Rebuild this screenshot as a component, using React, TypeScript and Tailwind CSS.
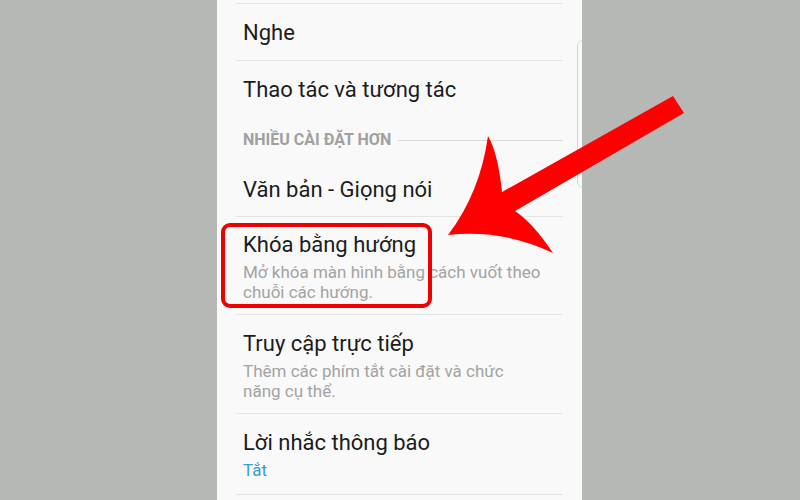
import React from "react";

const Divider = () => <div className="mx-[19px] h-px bg-[#e4e4e4]" />;

function Row({ title, sub, subColor = "text-[#a3a3a3]", pt = "pt-[16px]", pb = "pb-[13px]" }: { title: string; sub?: string[]; subColor?: string; pt?: string; pb?: string }) {
  return (
    <div className={`pl-[26px] pr-[20px] ${pt} ${pb}`}>
      <div className="text-[22px] leading-[28px] text-[#1c1c1c]">{title}</div>
      {sub && (
        <div className={`mt-[3px] flex flex-col text-[17px] leading-[20px] ${subColor}`}>
          {sub.map((l, i) => (
            <span key={i} className="whitespace-nowrap">{l}</span>
          ))}
        </div>
      )}
    </div>
  );
}

function SingleRow({ title, h }: { title: string; h: string }) {
  return (
    <div className={`flex items-center pl-[26px] ${h} text-[22px] text-[#1c1c1c]`}>{title}</div>
  );
}

export default function App() {
  return (
    <div
      className="relative flex h-[500px] w-[800px] overflow-hidden bg-[#b6b8b6] pl-[217px]"
      style={{ fontFamily: "Roboto, 'Noto Sans', sans-serif" }}
    >
      <div className="relative h-[500px] w-[365px] overflow-hidden bg-[#f9f9f9]">
        <div className="h-[3px]" />
        <Divider />
        <SingleRow title="Nghe" h="h-[56px]" />
        <Divider />
        <SingleRow title="Thao tác và tương tác" h="h-[57px]" />
        <div className="flex h-[44px] items-center gap-[7px] pl-[26px] pr-[19px]">
          <span className="text-[16px] font-bold text-[#a0a0a0]">NHIỀU CÀI ĐẶT HƠN</span>
          <div className="h-px flex-1 bg-[#d8d8d8]" />
        </div>
        <SingleRow title="Văn bản - Giọng nói" h="h-[54px]" />
        <Divider />
        <Row title="Khóa bằng hướng" sub={["Mở khóa màn hình bằng cách vuốt theo", "chuỗi các hướng."]} pt="pt-[14px]" pb="pb-[12px]" />
        <Divider />
        <Row title="Truy cập trực tiếp" sub={["Thêm các phím tắt cài đặt và chức", "năng cụ thể."]} pt="pt-[15px]" pb="pb-[12px]" />
        <Divider />
        <Row title="Lời nhắc thông báo" sub={["Tắt"]} subColor="text-[#3d9ccc]" pt="pt-[15px]" pb="pb-[14px]" />
        <Divider />
        <div className="absolute left-[360px] top-[40px] h-[148px] w-[20px] rounded-[6px] border border-[#d6d6d6]" />
      </div>
      <div className="absolute left-[221px] top-[223px] h-[85px] w-[211px] rounded-[9px] border-[4px] border-[#ee0000]" />
      <svg className="absolute left-0 top-0" width="800" height="500" viewBox="0 0 800 500">
        <path
          d="M 673 96 L 684 113 L 515 211 Q 533 223 553 253 Q 503 229 448 235 Q 480 193 488 136 Q 498 153 502 192 Z"
          fill="#ff0000"
        />
      </svg>
    </div>
  );
}
